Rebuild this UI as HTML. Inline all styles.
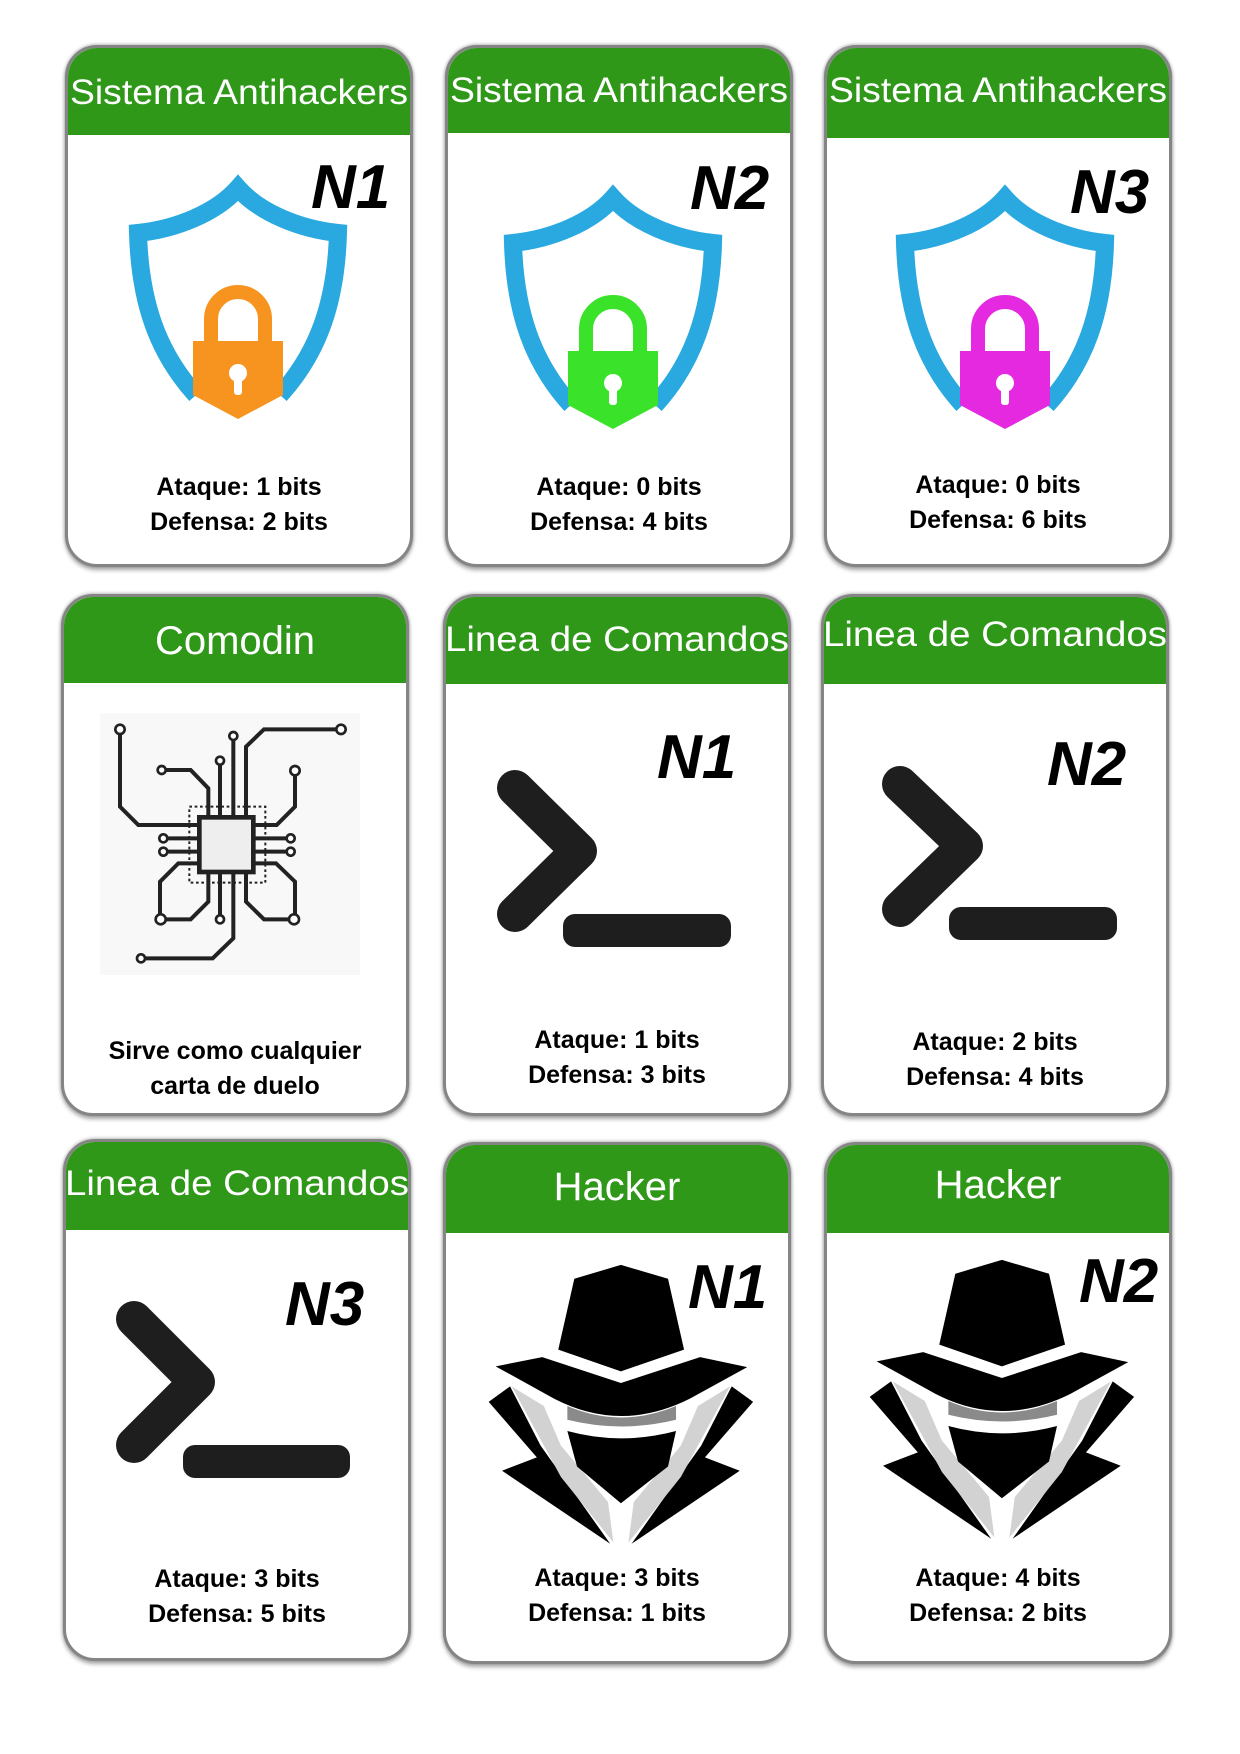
<!DOCTYPE html>
<html><head><meta charset="utf-8"><style>
html,body{margin:0;padding:0;background:#fff;}
body{width:1240px;height:1754px;position:relative;overflow:hidden;font-family:"Liberation Sans",sans-serif;}
.c{position:absolute;width:342px;height:516px;border:3px solid #858585;border-radius:32px;background:#fff;box-shadow:0 3px 4px rgba(0,0,0,.35),0 -1px 3px rgba(0,0,0,.25);overflow:hidden;}
.c>svg{position:absolute;left:-3px;top:-3px;width:348px;height:522px;overflow:visible;}
.hd{fill:#2f9819}
.tt{fill:#fff;font-family:"Liberation Sans",sans-serif;font-size:35px;}
.st{font-family:"Liberation Sans",sans-serif;font-weight:bold;font-size:25px;fill:#000;}
.n{font-family:"Liberation Sans",sans-serif;font-weight:bold;font-style:italic;font-size:62px;fill:#000;}
</style></head><body>

<svg width="0" height="0" style="position:absolute">
<defs>
<g id="shield">
<path d="M-42,82 C-80,40 -98,-10 -100,-80 C-62,-84 -22,-100 0,-125 C22,-100 62,-84 100,-80 C98,-10 80,40 42,82" fill="none" stroke="#29a9e0" stroke-width="18" stroke-linejoin="miter"/>
</g>
<g id="hacker">
<polygon points="412,397 500,430 530,600 412,652 295,600 325,430" fill="#000"/>
<polygon points="165,725 205,688 262,830 392,1065 190,890 255,858" fill="#000"/>
<polygon points="659,725 619,688 562,830 432,1065 634,890 569,858" fill="#000"/>
<polygon points="208,688 268,735 300,830 388,965 398,1062 300,905" fill="#d2d2d2"/>
<polygon points="616,688 556,735 524,830 436,965 426,1062 524,905" fill="#d2d2d2"/>
<path d="M312,735 Q412,790 515,735 L515,768 Q412,800 312,768Z" fill="#8a8a8a"/>
<path d="M178,640 L265,618 L412,680 L560,618 L648,642 L540,718 Q412,800 288,718Z" fill="#000"/>
<path d="M312,795 Q412,830 515,795 L500,880 L412,968 L330,880Z" fill="#000"/>
</g>
<g id="circuit" fill="none" stroke="#222" stroke-width="12">
<rect x="120" y="100" width="780" height="785" fill="#f8f8f8" stroke="none"/>
<path d="M180,160 V380 L235,435 H415"/>
<path d="M305,270 H392 L445,325 V415"/>
<path d="M480,255 V415"/>
<path d="M520,180 V415"/>
<path d="M558,415 V200 L612,148 H830"/>
<path d="M705,285 V380 L650,435 H580"/>
<path d="M320,475 H415 M320,515 H415 M585,475 H680 M585,515 H680"/>
<path d="M300,705 V605 L355,550 H415"/>
<path d="M305,718 H392 L445,665 V580"/>
<path d="M480,705 V580"/>
<path d="M520,580 V775 L458,835 H255"/>
<path d="M558,580 V665 L612,718 H690"/>
<path d="M585,550 H648 L705,605 V705"/>
<rect x="388" y="380" width="228" height="228" stroke-width="6" stroke-dasharray="8 8"/>
<rect x="418" y="412" width="162" height="164" fill="#eee" stroke-width="14"/>
<g fill="#fff" stroke-width="8">
<circle cx="180" cy="148" r="14"/><circle cx="305" cy="270" r="12"/><circle cx="480" cy="242" r="12"/><circle cx="520" cy="168" r="12"/><circle cx="843" cy="148" r="14"/><circle cx="705" cy="272" r="14"/>
<circle cx="310" cy="475" r="12"/><circle cx="310" cy="515" r="12"/><circle cx="692" cy="475" r="12"/><circle cx="692" cy="515" r="12"/>
<circle cx="302" cy="718" r="15"/><circle cx="480" cy="718" r="12"/><circle cx="702" cy="718" r="15"/><circle cx="243" cy="835" r="12"/>
</g>
</g>
</defs>
</svg>

<!-- Row 1 -->
<div class="c" style="left:65px;top:45px"><svg viewBox="0 0 348 522">
<rect class="hd" x="0" y="0" width="348" height="90"/>
<text class="tt" x="174" y="59" text-anchor="middle" textLength="338" lengthAdjust="spacingAndGlyphs">Sistema Antihackers</text>
<text class="n" x="246" y="163">N1</text>
<use href="#shield" x="173" y="268"/>
<path d="M146,300 V274 A27,27 0 0 1 200,274 V300" fill="none" stroke="#f7941f" stroke-width="14"/>
<path d="M128,296 H218 V350 L173,374 L128,350Z" fill="#f7941f"/>
<circle cx="173" cy="328" r="9" fill="#fff"/><rect x="169" y="330" width="8" height="20" rx="3" fill="#fff"/>
<text class="st" x="174" y="450" text-anchor="middle">Ataque: 1 bits</text>
<text class="st" x="174" y="485" text-anchor="middle">Defensa: 2 bits</text>
</svg></div>

<div class="c" style="left:445px;top:45px"><svg viewBox="0 0 348 522">
<rect class="hd" x="0" y="0" width="348" height="88"/>
<text class="tt" x="174" y="57" text-anchor="middle" textLength="338" lengthAdjust="spacingAndGlyphs">Sistema Antihackers</text>
<text class="n" x="245" y="164">N2</text>
<use href="#shield" x="168" y="278"/>
<path d="M141,310 V284 A27,27 0 0 1 195,284 V310" fill="none" stroke="#3ae22a" stroke-width="14"/>
<path d="M123,306 H213 V360 L168,384 L123,360Z" fill="#3ae22a"/>
<circle cx="168" cy="338" r="9" fill="#fff"/><rect x="164" y="340" width="8" height="20" rx="3" fill="#fff"/>
<text class="st" x="174" y="450" text-anchor="middle">Ataque: 0 bits</text>
<text class="st" x="174" y="485" text-anchor="middle">Defensa: 4 bits</text>
</svg></div>

<div class="c" style="left:824px;top:45px"><svg viewBox="0 0 348 522">
<rect class="hd" x="0" y="0" width="348" height="93"/>
<text class="tt" x="174" y="57" text-anchor="middle" textLength="338" lengthAdjust="spacingAndGlyphs">Sistema Antihackers</text>
<text class="n" x="246" y="168">N3</text>
<use href="#shield" x="181" y="278"/>
<path d="M154,310 V284 A27,27 0 0 1 208,284 V310" fill="none" stroke="#e429e0" stroke-width="14"/>
<path d="M136,306 H226 V360 L181,384 L136,360Z" fill="#e429e0"/>
<circle cx="181" cy="338" r="9" fill="#fff"/><rect x="177" y="340" width="8" height="20" rx="3" fill="#fff"/>
<text class="st" x="174" y="448" text-anchor="middle">Ataque: 0 bits</text>
<text class="st" x="174" y="483" text-anchor="middle">Defensa: 6 bits</text>
</svg></div>

<!-- Row 2 -->
<div class="c" style="left:61px;top:594px"><svg viewBox="0 0 348 522">
<rect class="hd" x="0" y="0" width="348" height="89"/>
<text class="tt" x="174" y="60" text-anchor="middle" style="font-size:40px">Comodin</text>
<svg x="-1" y="86" width="340" height="320" viewBox="0 0 1020 960"><use href="#circuit"/></svg>
<text class="st" x="174" y="465" text-anchor="middle">Sirve como cualquier</text>
<text class="st" x="174" y="500" text-anchor="middle">carta de duelo</text>
</svg></div>

<div class="c" style="left:443px;top:594px"><svg viewBox="0 0 348 522">
<rect class="hd" x="0" y="0" width="348" height="90"/>
<text class="tt" x="174" y="57" text-anchor="middle" textLength="344" lengthAdjust="spacingAndGlyphs">Linea de Comandos</text>
<text class="n" x="214" y="184">N1</text>
<path d="M72,194 L136,257 L72,320" fill="none" stroke="#1e1e1e" stroke-width="36" stroke-linecap="round" stroke-linejoin="round"/>
<rect x="120" y="320" width="168" height="33" rx="12" fill="#1e1e1e"/>
<text class="st" x="174" y="454" text-anchor="middle">Ataque: 1 bits</text>
<text class="st" x="174" y="489" text-anchor="middle">Defensa: 3 bits</text>
</svg></div>

<div class="c" style="left:821px;top:594px"><svg viewBox="0 0 348 522">
<rect class="hd" x="0" y="0" width="348" height="90"/>
<text class="tt" x="174" y="52" text-anchor="middle" textLength="344" lengthAdjust="spacingAndGlyphs">Linea de Comandos</text>
<text class="n" x="226" y="191">N2</text>
<path d="M79,190 L144,252 L79,315" fill="none" stroke="#1e1e1e" stroke-width="36" stroke-linecap="round" stroke-linejoin="round"/>
<rect x="128" y="313" width="168" height="33" rx="12" fill="#1e1e1e"/>
<text class="st" x="174" y="456" text-anchor="middle">Ataque: 2 bits</text>
<text class="st" x="174" y="491" text-anchor="middle">Defensa: 4 bits</text>
</svg></div>

<!-- Row 3 -->
<div class="c" style="left:63px;top:1139px"><svg viewBox="0 0 348 522">
<rect class="hd" x="0" y="0" width="348" height="91"/>
<text class="tt" x="174" y="56" text-anchor="middle" textLength="344" lengthAdjust="spacingAndGlyphs">Linea de Comandos</text>
<text class="n" x="222" y="186">N3</text>
<path d="M71,180 L134,243 L71,306" fill="none" stroke="#1e1e1e" stroke-width="36" stroke-linecap="round" stroke-linejoin="round"/>
<rect x="120" y="306" width="167" height="33" rx="12" fill="#1e1e1e"/>
<text class="st" x="174" y="448" text-anchor="middle">Ataque: 3 bits</text>
<text class="st" x="174" y="483" text-anchor="middle">Defensa: 5 bits</text>
</svg></div>

<div class="c" style="left:443px;top:1142px"><svg viewBox="0 0 348 522">
<rect class="hd" x="0" y="0" width="348" height="91"/>
<text class="tt" x="174" y="58" text-anchor="middle" style="font-size:40px">Hacker</text>
<svg x="43" y="120" width="273" height="288" viewBox="160 390 510 690" preserveAspectRatio="none"><use href="#hacker"/></svg>
<text class="n" x="245" y="166">N1</text>
<text class="st" x="174" y="444" text-anchor="middle">Ataque: 3 bits</text>
<text class="st" x="174" y="479" text-anchor="middle">Defensa: 1 bits</text>
</svg></div>

<div class="c" style="left:824px;top:1142px"><svg viewBox="0 0 348 522">
<rect class="hd" x="0" y="0" width="348" height="91"/>
<text class="tt" x="174" y="56" text-anchor="middle" style="font-size:40px">Hacker</text>
<svg x="43" y="115" width="273" height="288" viewBox="160 390 510 690" preserveAspectRatio="none"><use href="#hacker"/></svg>
<text class="n" x="255" y="160">N2</text>
<text class="st" x="174" y="444" text-anchor="middle">Ataque: 4 bits</text>
<text class="st" x="174" y="479" text-anchor="middle">Defensa: 2 bits</text>
</svg></div>

</body></html>
